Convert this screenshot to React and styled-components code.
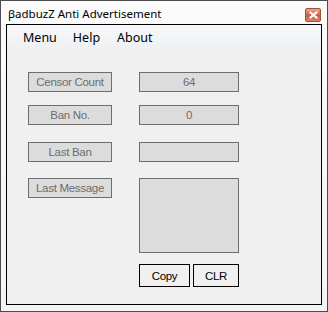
import styled, { createGlobalStyle } from "styled-components";

const GlobalStyle = createGlobalStyle`
  html, body {
    margin: 0;
    padding: 0;
    background: #ffffff;
  }
  * {
    box-sizing: border-box;
  }
`;

const Window = styled.div`
  width: 328px;
  height: 312px;
  border: 1px solid #4c4c4c;
  background: linear-gradient(#fbfbfb, #f3f3f3);
  display: flex;
  flex-direction: column;
  font-family: "Liberation Sans", Arial, sans-serif;
`;

const TitleBar = styled.div`
  height: 23px;
  display: flex;
  align-items: center;
  justify-content: space-between;
  padding: 0 6px 0 7px;
`;

const Title = styled.span`
  font-family: "Noto Sans", "Liberation Sans", sans-serif;
  font-size: 11.5px;
  color: #000;
  margin-top: 2px;
`;

const CloseButton = styled.div`
  width: 16px;
  height: 14px;
  margin-top: 4px;
  border: 1px solid #a0503e;
  border-radius: 2px;
  background: linear-gradient(#e9a592, #cc5c42 55%, #d9826a);
  display: flex;
  align-items: center;
  justify-content: center;
`;

const Client = styled.div`
  margin: 0 5px 0 5px;
  height: 281px;
  border: 1px solid #000;
  background: #f0f0f0;
  display: flex;
  flex-direction: column;
`;

const MenuBar = styled.div`
  height: 25px;
  display: flex;
  align-items: center;
  padding-left: 9px;
  background: linear-gradient(#f7f8f9, #eef0f2);
`;

const MenuItem = styled.span`
  font-family: "Noto Sans", "Liberation Sans", sans-serif;
  font-size: 12.5px;
  color: #000;
  padding: 0 7px;
  margin-right: ${(p) => p.$gap || 0}px;
`;

const Form = styled.div`
  padding: 22px 0 0 21px;
  display: flex;
  flex-direction: column;
`;

const Row = styled.div`
  display: flex;
  align-items: flex-start;
  gap: 27px;
  margin-top: ${(p) => p.$top || 0}px;
`;

const Field = styled.div`
  width: ${(p) => p.$width}px;
  height: ${(p) => p.$height || 20}px;
  border: 1px solid #6d6d6d;
  background: #dcdcdc;
  color: #6d6d6d;
  font-size: 11.5px;
  letter-spacing: -0.3px;
  display: flex;
  justify-content: center;
  align-items: ${(p) => (p.$multi ? "flex-start" : "center")};
`;

const Actions = styled.div`
  display: flex;
  gap: 3px;
  margin: 11px 0 0 111px;
`;

const Button = styled.button`
  width: ${(p) => p.$width}px;
  height: 23px;
  border: 1px solid #000;
  background: #f0f0f0;
  color: #000;
  font-family: "Liberation Sans", Arial, sans-serif;
  font-size: 11.5px;
  letter-spacing: -0.3px;
  padding: 0;
`;

const CloseIcon = () => (
  <svg width="9" height="8" viewBox="0 0 9 8">
    <path
      d="M1.5 1.5 L7.5 6.5 M7.5 1.5 L1.5 6.5"
      stroke="#fff"
      strokeWidth="2"
      strokeLinecap="square"
    />
  </svg>
);

const App = () => {
  return (
    <>
      <GlobalStyle />
      <Window>
        <TitleBar>
          <Title>βadbuzZ Anti Advertisement</Title>
          <CloseButton>
            <CloseIcon />
          </CloseButton>
        </TitleBar>
        <Client>
          <MenuBar>
            <MenuItem $gap={2}>Menu</MenuItem>
            <MenuItem $gap={3}>Help</MenuItem>
            <MenuItem>About</MenuItem>
          </MenuBar>
          <Form>
            <Row>
              <Field $width={84}>Censor Count</Field>
              <Field $width={100}>64</Field>
            </Row>
            <Row $top={13}>
              <Field $width={84}>Ban No.</Field>
              <Field $width={100}>0</Field>
            </Row>
            <Row $top={17}>
              <Field $width={84}>Last Ban</Field>
              <Field $width={100}></Field>
            </Row>
            <Row $top={16}>
              <Field $width={84}>Last Message</Field>
              <Field $width={100} $height={75} $multi></Field>
            </Row>
            <Actions>
              <Button $width={51}>Copy</Button>
              <Button $width={46}>CLR</Button>
            </Actions>
          </Form>
        </Client>
      </Window>
    </>
  );
};

export default App;
